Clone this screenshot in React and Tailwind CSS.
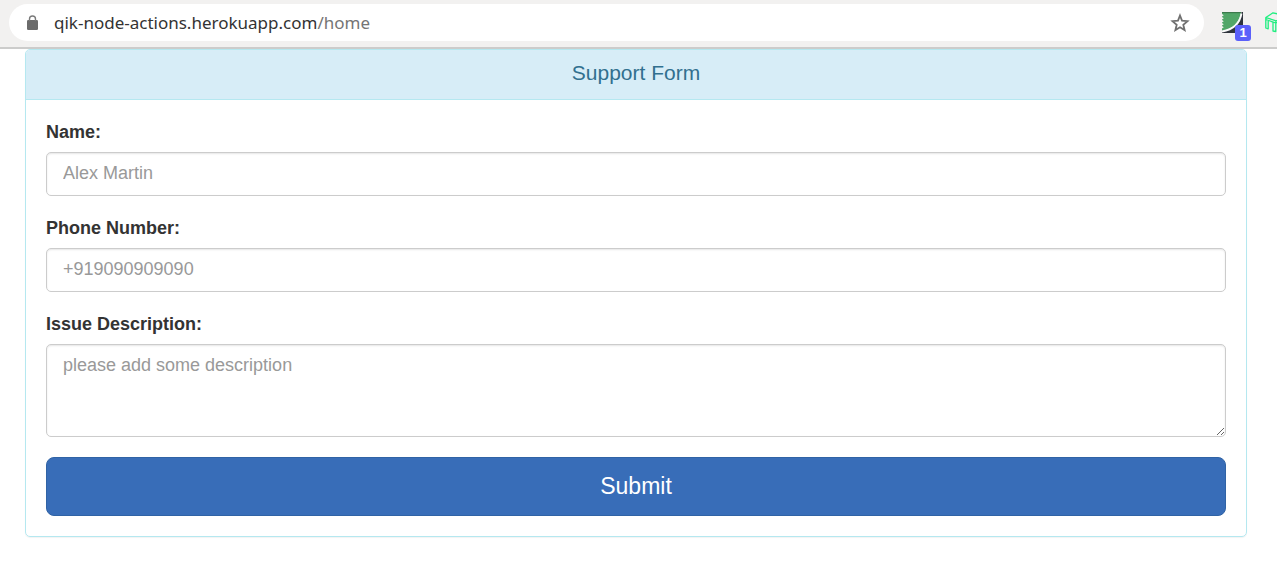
import React from "react";

function LockIcon() {
  return (
    <svg className="h-4 w-4 shrink-0" viewBox="0 0 16 16" fill="none" aria-hidden="true">
      <rect x="3" y="5" width="11" height="10" rx="1.3" fill="#6b6b6b" />
      <path d="M5.5 6V4a3 3 0 0 1 6 0v2" stroke="#7a7a7a" strokeWidth="1.4" />
    </svg>
  );
}

function StarIcon() {
  return (
    <svg className="h-6 w-6" viewBox="0 0 24 24" fill="none" stroke="#707070" strokeWidth="1.8" aria-hidden="true">
      <path d="M12 4.500l2 5.100 5.500.5-4.200 3.600 1.300 5.400L12 16.200l-4.600 2.900 1.300-5.400-4.200-3.600 5.500-.5z" />
    </svg>
  );
}

function GraphExtensionIcon() {
  return (
    <svg className="h-[22px] w-[22px]" viewBox="0 0 22 22" fill="none" aria-hidden="true">
      <path d="M0 21V19.500Q17 17 19.500 0H21V21z" fill="#2f343c" />
      <path d="M0 0h19C18 9.500 11 17.500 0 19z" fill="#52a668" />
      <path d="M19.500 1.500C18 10.500 11.500 17.500 0 19.500" stroke="#fbfbfb" strokeWidth="1.8" />
      <path d="M0 2l1.800 1.200L0 4.400zM0 5l1.800 1.200L0 7.400zM0 8l1.800 1.200L0 10.400zM0 11l1.800 1.200L0 13.400zM0 14l1.800 1.200L0 16.400z" fill="#f2f1f0" />
      <path d="M0 .6h19" stroke="#3c7a4c" strokeWidth="1.200" />
    </svg>
  );
}

function TableExtensionIcon() {
  return (
    <svg
      className="h-6 w-6 shrink-0"
      viewBox="0 0 24 24"
      fill="none"
      stroke="#20ee80"
      strokeWidth="1.3"
      strokeLinejoin="round"
      aria-hidden="true"
    >
      <path d="M.8 5.500L8 .8l14 3.200L11 8.800zM.8 5.500v10.500l2.400.8V9M.8 7.500l10 3.500L22 6V4M8 10.500v8.500l2.800.5V8.800M22 6v10l-2.400-.5V8" />
    </svg>
  );
}

function BrowserBar() {
  return (
    <header className="flex border-b-2 border-[#cccccb] bg-[#f2f1f0] pt-1 pb-1.5 pl-[9px]">
      <div className="flex h-[37px] min-w-0 flex-1 items-center rounded-full bg-white pr-3 pl-[15px]">
        <LockIcon />
        <span className="ml-3.5 min-w-0 flex-1 truncate font-['Noto_Sans',sans-serif] text-[17px] leading-6 text-[#333333]">
          qik-node-actions.herokuapp.com<span className="text-[#757575]">/home</span>
        </span>
        <button type="button" aria-label="Bookmark this page">
          <StarIcon />
        </button>
      </div>
      <div className="flex w-[73px] shrink-0 items-start gap-[21px] overflow-hidden pt-2 pl-[18px]">
        <button type="button" aria-label="Graph extension" className="relative shrink-0">
          <GraphExtensionIcon />
          <span className="absolute top-[13px] left-[13px] flex h-4 w-4 items-center justify-center rounded-[3px] bg-[#5b60fa] text-[13px] font-bold text-white">
            1
          </span>
        </button>
        <button type="button" aria-label="Table extension" className="shrink-0">
          <TableExtensionIcon />
        </button>
      </div>
    </header>
  );
}

const fieldClass =
  "block w-full rounded-[5px] border border-[#cccccc] bg-white px-4 text-[18px] leading-[26px] text-[#555555] shadow-[inset_0_1px_2px_rgba(0,0,0,0.1)] outline-none placeholder:text-[#999999] focus:border-[#66afe9]";

function Field({ id, label, children }) {
  return (
    <div className="mb-5">
      <label htmlFor={id} className="mb-2 block text-[18px] leading-6 font-bold">
        {label}
      </label>
      {children}
    </div>
  );
}

export default function App() {
  return (
    <div className="min-h-screen bg-white font-['Liberation_Sans',sans-serif] text-[#333333]">
      <BrowserBar />
      <main className="pr-[30px] pl-[25px]">
        <section className="rounded-[5px] border border-[#b5e8f0] shadow-[0_1px_1px_rgba(0,0,0,0.05)]">
          <h1 className="rounded-t border-b border-[#b5e8f0] bg-[#d7edf7] pt-2.5 pb-[13px] text-center text-[21px] leading-[26px] text-[#31708f]">
            Support Form
          </h1>
          <form className="p-5" onSubmit={(e) => e.preventDefault()}>
            <Field id="name" label="Name:">
              <input id="name" type="text" placeholder="Alex Martin" className={fieldClass + " h-11 pt-1.5 pb-2"} />
            </Field>
            <Field id="phone" label="Phone Number:">
              <input id="phone" type="tel" placeholder="+919090909090" className={fieldClass + " h-11 pt-1.5 pb-2"} />
            </Field>
            <Field id="issue" label="Issue Description:">
              <textarea
                id="issue"
                placeholder="please add some description"
                className={fieldClass + " h-[93px] resize-y py-[7px]"}
              />
            </Field>
            <button
              type="submit"
              className="block h-[59px] w-full rounded-lg border border-[#3063a5] bg-[#386db8] pb-0.5 text-[23px] leading-8 text-white"
            >
              Submit
            </button>
          </form>
        </section>
      </main>
    </div>
  );
}
